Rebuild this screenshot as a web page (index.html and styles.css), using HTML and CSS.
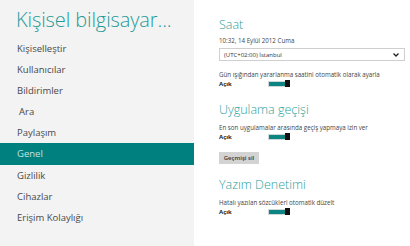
FILE: index.html
```html
<!DOCTYPE html>
<html lang="tr">
<head>
    <meta charset="UTF-8">
    <meta name="viewport" content="width=device-width, initial-scale=1.0">
    <title>Bilgisayar ayarları</title>
    <link rel="stylesheet" href="styles.css">
</head>
<body>
    <div class="page">
        <div class="sidebar">
            <h1>Kişisel bilgisayar...</h1>
            <ul class="menu">
                <li>Kişiselleştir</li>
                <li>Kullanıcılar</li>
                <li>Bildirimler</li>
                <li class="indent">Ara</li>
                <li>Paylaşım</li>
                <li class="active">Genel</li>
                <li>Gizlilik</li>
                <li>Cihazlar</li>
                <li>Erişim Kolaylığı</li>
            </ul>
        </div>

        <div class="content">
            <h2>Saat</h2>
            <p class="meta first">10:32, 14 Eylül 2012 Cuma</p>
            <div class="select">
                <span>(UTC+02:00) İstanbul</span>
                <svg width="6" height="4" viewBox="0 0 6 4"><polyline points="0.5,0.5 3,3 5.5,0.5" fill="none" stroke="#222" stroke-width="1.3"/></svg>
            </div>
            <p class="meta gap">Gün ışığından yararlanma saatini otomatik olarak ayarla</p>
            <div class="switch-row">
                <span class="state">Açık</span>
                <span class="toggle"><span class="track"></span><span class="thumb"></span></span>
            </div>

            <h2 class="section">Uygulama geçişi</h2>
            <p class="meta">En son uygulamalar arasında geçiş yapmaya izin ver</p>
            <div class="switch-row">
                <span class="state">Açık</span>
                <span class="toggle"><span class="track"></span><span class="thumb"></span></span>
            </div>
            <button class="btn">Geçmişi sil</button>

            <h2 class="section last">Yazım Denetimi</h2>
            <p class="meta">Hatalı yazılan sözcükleri otomatik düzelt</p>
            <div class="switch-row">
                <span class="state">Açık</span>
                <span class="toggle"><span class="track"></span><span class="thumb"></span></span>
            </div>
        </div>
    </div>
</body>
</html>
```

FILE: styles.css
```css
body {
    margin: 0;
    font-family: 'Open Sans', 'Noto Sans', sans-serif;
    background: #fff;
    color: #333;
    overflow: hidden;
}
.page {
    display: flex;
    height: 246px;
}
.sidebar {
    width: 194px;
    background-color: #f3f3f3;
    flex-shrink: 0;
}
h1 {
    margin: 0;
    padding: 6px 0 0 16px;
    height: 32px;
    font-size: 20px;
    font-weight: 300;
    line-height: 28px;
    color: #1f9b98;
    white-space: nowrap;
    letter-spacing: -0.1px;
}
.menu {
    list-style-type: none;
    margin: 0;
    padding: 0;
}
.menu li {
    height: 21px;
    line-height: 21px;
    padding-left: 17px;
    font-size: 9.5px;
    color: #484848;
}
.menu li.indent {
    padding-left: 19px;
}
.menu li.active {
    height: 22px;
    line-height: 22px;
    background-color: #00807e;
    color: #c4e2e1;
}
.content {
    flex: 1;
    padding: 17px 5px 0 25px;
}
h2 {
    margin: 0;
    font-size: 12.5px;
    font-weight: 300;
    line-height: 16px;
    color: #2a9f9c;
}
h2.section {
    margin-top: 14px;
}
h2.last {
    margin-top: 13px;
}
.meta {
    margin: 6px 0 0;
    font-size: 6.2px;
    line-height: 8px;
    color: #444;
    white-space: nowrap;
}
.meta.first {
    margin-top: 4px;
}
.meta.gap {
    margin-top: 10px;
}
.select {
    display: flex;
    align-items: center;
    justify-content: space-between;
    height: 11px;
    margin-top: 3px;
    padding: 0 5px 0 4px;
    border: 1px solid #cfcfcf;
    font-size: 6px;
    color: #333;
}
.switch-row {
    display: flex;
    align-items: center;
    height: 9px;
}
.state {
    width: 49px;
    font-size: 6px;
    font-weight: bold;
    color: #222;
}
.toggle {
    display: flex;
    align-items: center;
}
.track {
    width: 16px;
    height: 4px;
    border: 1px solid #cfd8d8;
    border-right: none;
    background-color: #0f8583;
}
.thumb {
    width: 5px;
    height: 7px;
    background-color: #111;
}
.btn {
    display: block;
    margin-top: 11px;
    width: 40px;
    height: 12px;
    padding: 0;
    border: none;
    background-color: #d3d3d3;
    font-family: 'Open Sans', 'Noto Sans', sans-serif;
    font-size: 6px;
    font-weight: 600;
    color: #333;
}
```
